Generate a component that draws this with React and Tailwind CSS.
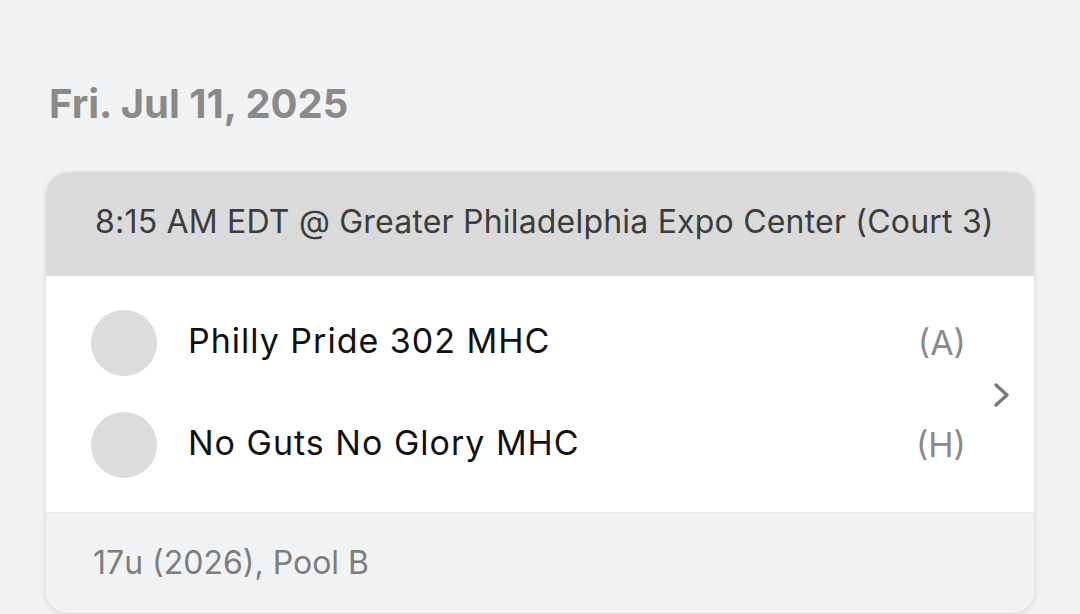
import React from "react";

function Team({ name, tag }) {
  return (
    <div className="flex items-center h-[102px]">
      <div className="w-[66px] h-[66px] rounded-full bg-[#dcdcdc] shrink-0" />
      <div className="ml-[31px] flex-1 text-[34px] tracking-[1px] text-[#111] leading-none -mt-[4px]">{name}</div>
      <div className="text-[34px] text-[#8a8a8a] leading-none mr-[68px]">{tag}</div>
    </div>
  );
}

export default function App() {
  return (
    <div
      className="w-[1080px] h-[614px] overflow-hidden bg-[#f1f2f4]"
      style={{ fontFamily: "Inter, 'Noto Sans', sans-serif" }}
    >
      <div className="pt-[82px] pl-[49px] text-[40px] font-bold text-[#8a8a8a] leading-[44px]">
        Fri. Jul 11, 2025
      </div>
      <div className="mt-[46px] mx-[46px] rounded-[22px] overflow-hidden bg-white shadow-[0_2px_6px_rgba(0,0,0,0.12)]">
        <div className="h-[104px] bg-[#dadada] flex items-center pl-[49px] pb-[4px] text-[32px] tracking-[0.2px] text-[#3c3c3c]">
          8:15 AM EDT @ Greater Philadelphia Expo Center (Court 3)
        </div>
        <div className="relative bg-white pt-[16px] pb-[16px] pl-[45px] border-b border-[#e8e8e8]">
          <Team name="Philly Pride 302 MHC" tag="(A)" />
          <Team name="No Guts No Glory MHC" tag="(H)" />
          <svg
            className="absolute right-[20px] top-[104px]"
            width="24"
            height="30"
            viewBox="0 0 24 30"
            fill="none"
          >
            <path d="M6 5 L17 15 L6 25" stroke="#7a7a7a" strokeWidth="3.5" strokeLinecap="round" strokeLinejoin="round" />
          </svg>
        </div>
        <div className="h-[100px] bg-[#f1f2f4] pl-[47px] pt-[26px] text-[32px] text-[#7d7d7d]">
          17u (2026), Pool B
        </div>
      </div>
    </div>
  );
}
